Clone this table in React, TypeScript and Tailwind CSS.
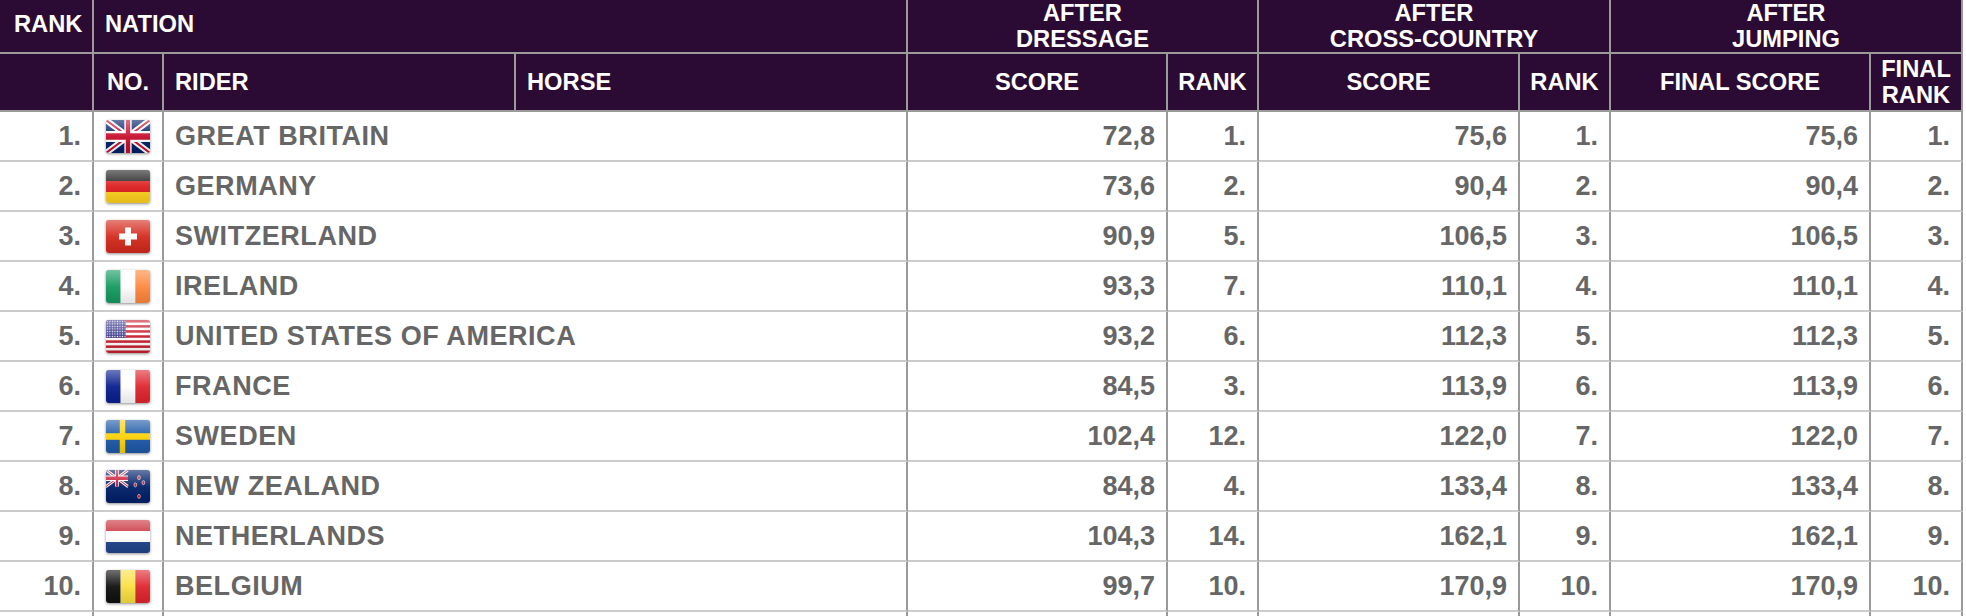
import React from 'react';

type Row = {
  rank: string;
  code: string;
  nation: string;
  dScore: string;
  dRank: string;
  xScore: string;
  xRank: string;
  fScore: string;
  fRank: string;
};

const rows: Row[] = [
  { rank: '1.', code: 'GBR', nation: 'GREAT BRITAIN', dScore: '72,8', dRank: '1.', xScore: '75,6', xRank: '1.', fScore: '75,6', fRank: '1.' },
  { rank: '2.', code: 'GER', nation: 'GERMANY', dScore: '73,6', dRank: '2.', xScore: '90,4', xRank: '2.', fScore: '90,4', fRank: '2.' },
  { rank: '3.', code: 'SUI', nation: 'SWITZERLAND', dScore: '90,9', dRank: '5.', xScore: '106,5', xRank: '3.', fScore: '106,5', fRank: '3.' },
  { rank: '4.', code: 'IRL', nation: 'IRELAND', dScore: '93,3', dRank: '7.', xScore: '110,1', xRank: '4.', fScore: '110,1', fRank: '4.' },
  { rank: '5.', code: 'USA', nation: 'UNITED STATES OF AMERICA', dScore: '93,2', dRank: '6.', xScore: '112,3', xRank: '5.', fScore: '112,3', fRank: '5.' },
  { rank: '6.', code: 'FRA', nation: 'FRANCE', dScore: '84,5', dRank: '3.', xScore: '113,9', xRank: '6.', fScore: '113,9', fRank: '6.' },
  { rank: '7.', code: 'SWE', nation: 'SWEDEN', dScore: '102,4', dRank: '12.', xScore: '122,0', xRank: '7.', fScore: '122,0', fRank: '7.' },
  { rank: '8.', code: 'NZL', nation: 'NEW ZEALAND', dScore: '84,8', dRank: '4.', xScore: '133,4', xRank: '8.', fScore: '133,4', fRank: '8.' },
  { rank: '9.', code: 'NED', nation: 'NETHERLANDS', dScore: '104,3', dRank: '14.', xScore: '162,1', xRank: '9.', fScore: '162,1', fRank: '9.' },
  { rank: '10.', code: 'BEL', nation: 'BELGIUM', dScore: '99,7', dRank: '10.', xScore: '170,9', xRank: '10.', fScore: '170,9', fRank: '10.' },
];

function UnionJack() {
  return (
    <g>
      <rect width="60" height="30" fill="#012169" />
      <path d="M0,0 L60,30 M60,0 L0,30" stroke="#fff" strokeWidth="6" />
      <path d="M0,0 L60,30 M60,0 L0,30" stroke="#C8102E" strokeWidth="2" />
      <path d="M30,0 V30 M0,15 H60" stroke="#fff" strokeWidth="10" />
      <path d="M30,0 V30 M0,15 H60" stroke="#C8102E" strokeWidth="6" />
    </g>
  );
}

function FlagArt({ code }: { code: string }) {
  switch (code) {
    case 'GBR':
      return (
        <svg viewBox="0 0 60 30" preserveAspectRatio="none" className="w-full h-full">
          <UnionJack />
        </svg>
      );
    case 'GER':
      return (
        <svg viewBox="0 0 3 3" preserveAspectRatio="none" className="w-full h-full">
          <rect width="3" height="1" fill="#222" />
          <rect y="1" width="3" height="1" fill="#dd1f1f" />
          <rect y="2" width="3" height="1" fill="#ffd21f" />
        </svg>
      );
    case 'SUI':
      return (
        <svg viewBox="0 0 44 33" preserveAspectRatio="none" className="w-full h-full">
          <rect width="44" height="33" fill="#d52b1e" />
          <rect x="13" y="13.5" width="18" height="6" fill="#fff" />
          <rect x="19" y="7.5" width="6" height="18" fill="#fff" />
        </svg>
      );
    case 'IRL':
      return (
        <svg viewBox="0 0 3 3" preserveAspectRatio="none" className="w-full h-full">
          <rect width="1" height="3" fill="#169b62" />
          <rect x="1" width="1" height="3" fill="#fff" />
          <rect x="2" width="1" height="3" fill="#ff883e" />
        </svg>
      );
    case 'USA':
      return (
        <svg viewBox="0 0 19 13" preserveAspectRatio="none" className="w-full h-full">
          <defs>
            <pattern id="usStars" width="1.1" height="1" patternUnits="userSpaceOnUse">
              <circle cx="0.55" cy="0.5" r="0.28" fill="#fff" />
            </pattern>
          </defs>
          <rect width="19" height="13" fill="#fff" />
          {[0, 2, 4, 6, 8, 10, 12].map((y) => (
            <rect key={y} y={y} width="19" height="1" fill="#c8202f" />
          ))}
          <rect width="8.5" height="7" fill="#3c3b8e" />
          <rect width="8.5" height="7" fill="url(#usStars)" />
        </svg>
      );
    case 'FRA':
      return (
        <svg viewBox="0 0 3 3" preserveAspectRatio="none" className="w-full h-full">
          <rect width="1" height="3" fill="#0a1f8f" />
          <rect x="1" width="1" height="3" fill="#fff" />
          <rect x="2" width="1" height="3" fill="#e0262f" />
        </svg>
      );
    case 'SWE':
      return (
        <svg viewBox="0 0 16 10" preserveAspectRatio="none" className="w-full h-full">
          <rect width="16" height="10" fill="#1e5aa8" />
          <rect x="5" width="2" height="10" fill="#fdd20a" />
          <rect y="4" width="16" height="2" fill="#fdd20a" />
        </svg>
      );
    case 'NZL':
      return (
        <svg viewBox="0 0 60 30" preserveAspectRatio="none" className="w-full h-full">
          <rect width="60" height="30" fill="#012169" />
          <g transform="scale(0.5)">
            <UnionJack />
          </g>
          {[
            [45, 7],
            [40, 13.5],
            [51, 11.5],
            [45, 24],
          ].map(([cx, cy]) => (
            <circle key={`${cx}-${cy}`} cx={cx} cy={cy} r="1.9" fill="#c8102e" stroke="#fff" strokeWidth="0.6" />
          ))}
        </svg>
      );
    case 'NED':
      return (
        <svg viewBox="0 0 3 3" preserveAspectRatio="none" className="w-full h-full">
          <rect width="3" height="1" fill="#c8303a" />
          <rect y="1" width="3" height="1" fill="#fff" />
          <rect y="2" width="3" height="1" fill="#21468b" />
        </svg>
      );
    case 'BEL':
      return (
        <svg viewBox="0 0 3 3" preserveAspectRatio="none" className="w-full h-full">
          <rect width="1" height="3" fill="#111" />
          <rect x="1" width="1" height="3" fill="#fae042" />
          <rect x="2" width="1" height="3" fill="#e0262f" />
        </svg>
      );
    default:
      return null;
  }
}

function Flag({ code }: { code: string }) {
  return (
    <div className="relative w-[44px] h-[33px] rounded-[3px] overflow-hidden shadow-[0_1px_3px_rgba(0,0,0,0.45)]">
      <FlagArt code={code} />
      <div className="absolute inset-0 bg-linear-to-b from-white/40 via-white/5 to-black/10" />
    </div>
  );
}

const head = 'flex items-center bg-[#2b0b33] text-white font-bold text-[23.7px] leading-[26px] border-r-2 border-b-2 border-[#9a9a9a]';
const cell = 'flex items-center h-[50px] border-r-2 border-b-2 border-r-[#9a9a9a] border-b-[#cccccc] text-[#666666] font-bold text-[27px] leading-none';

export default function App() {
  return (
    <div className="w-[1966px] min-h-[616px] bg-white font-['Liberation_Sans',Arial,sans-serif]">
      <div className="grid w-[1963px] grid-cols-[94px_70px_352px_392px_260px_91px_261px_91px_260px_92px]">
        {/* header, first line */}
        <div className={`${head} h-[54px] pl-[14px] pb-[5px]`}>RANK</div>
        <div className={`${head} col-span-3 pl-[11px] pb-[5px]`}>NATION</div>
        <div className={`${head} col-span-2 justify-center text-center`}>AFTER<br />DRESSAGE</div>
        <div className={`${head} col-span-2 justify-center text-center`}>AFTER<br />CROSS-COUNTRY</div>
        <div className={`${head} col-span-2 justify-center text-center`}>AFTER<br />JUMPING</div>

        {/* header, second line */}
        <div className={`${head} h-[58px]`} />
        <div className={`${head} justify-center`}>NO.</div>
        <div className={`${head} pl-[11px]`}>RIDER</div>
        <div className={`${head} pl-[11px]`}>HORSE</div>
        <div className={`${head} justify-center`}>SCORE</div>
        <div className={`${head} justify-center`}>RANK</div>
        <div className={`${head} justify-center`}>SCORE</div>
        <div className={`${head} justify-center`}>RANK</div>
        <div className={`${head} justify-center`}>FINAL SCORE</div>
        <div className={`${head} justify-center text-center`}>FINAL<br />RANK</div>

        {rows.map((r) => (
          <React.Fragment key={r.code}>
            <div className={`${cell} justify-end pr-[11px]`}>{r.rank}</div>
            <div className={`${cell} justify-center`}>
              <Flag code={r.code} />
            </div>
            <div className={`${cell} col-span-2 pl-[11px] tracking-[0.55px]`}>{r.nation}</div>
            <div className={`${cell} justify-end pr-[11px]`}>{r.dScore}</div>
            <div className={`${cell} justify-end pr-[11px]`}>{r.dRank}</div>
            <div className={`${cell} justify-end pr-[11px]`}>{r.xScore}</div>
            <div className={`${cell} justify-end pr-[11px]`}>{r.xRank}</div>
            <div className={`${cell} justify-end pr-[11px]`}>{r.fScore}</div>
            <div className={`${cell} justify-end pr-[11px]`}>{r.fRank}</div>
          </React.Fragment>
        ))}

        {/* next row, only its top edge shows */}
        <div className={cell} />
        <div className={cell} />
        <div className={`${cell} col-span-2`} />
        <div className={cell} />
        <div className={cell} />
        <div className={cell} />
        <div className={cell} />
        <div className={cell} />
        <div className={cell} />
      </div>
    </div>
  );
}
